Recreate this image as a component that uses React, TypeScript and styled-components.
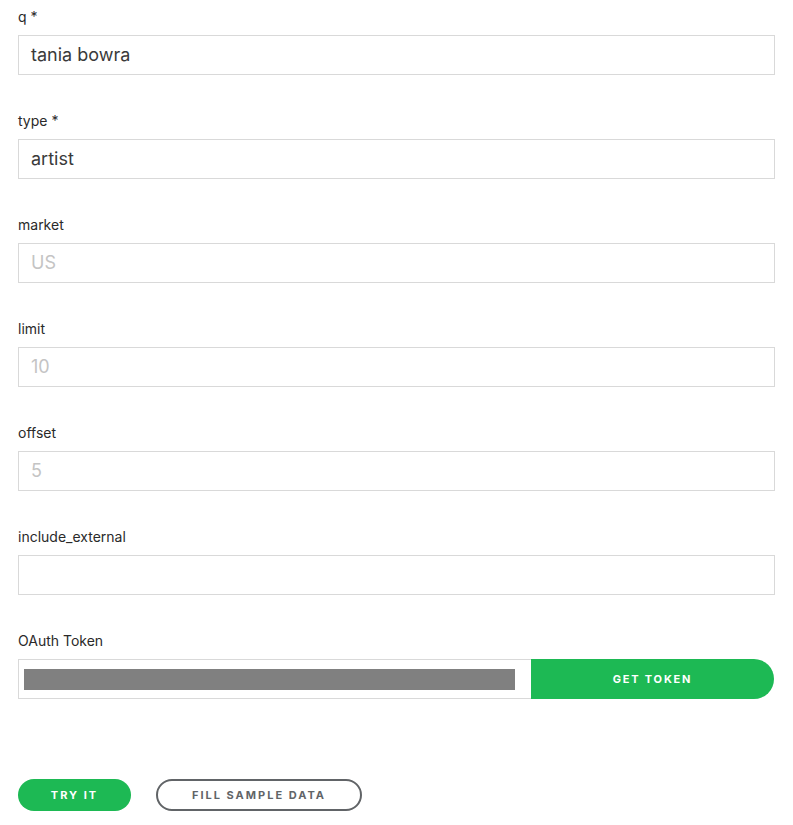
import React from "react";
import styled, { createGlobalStyle } from "styled-components";

const Global = createGlobalStyle`
  html, body { margin: 0; padding: 0; background: #fff; }
  body { font-family: "Inter", "Lato", "Liberation Sans", sans-serif; }
  * { box-sizing: border-box; }
`;

const Page = styled.div`
  padding: 7px 18px 0 18px;
  width: 793px;
`;

const Field = styled.div`
  display: flex;
  flex-direction: column;
  margin-bottom: 36px;
`;

const Label = styled.label`
  display: block;
  font-size: 14px;
  line-height: 20px;
  font-weight: 400;
  color: #2a2a2a;
  margin-bottom: 8px;
`;

const Input = styled.div<{ $placeholder?: boolean }>`
  height: 40px;
  border: 1px solid #d9d9d9;
  padding: 0 12px 2px 12px;
  display: flex;
  align-items: center;
  font-size: 18px;
  font-weight: 400;
  color: ${(p) => (p.$placeholder ? "#c4c4c4" : "#3a3a3a")};
`;

const TokenRow = styled.div`
  display: flex;
  height: 40px;
`;

const TokenInput = styled.div`
  width: 513px;
  border: 1px solid #d9d9d9;
  border-right: none;
  padding: 9px 16px 8px 5px;
  display: flex;
`;

const TokenBar = styled.div`
  flex: 1;
  background: #808080;
`;

const GetToken = styled.button`
  flex: 1;
  border: none;
  background: #1db954;
  color: #fff;
  border-radius: 0 20px 20px 0;
  font-family: inherit;
  font-weight: 700;
  font-size: 11px;
  letter-spacing: 1.8px;
  text-transform: uppercase;
  margin-right: 1px;
  padding: 0 0 1px 0;
`;

const Actions = styled.div`
  display: flex;
  gap: 25px;
  margin-top: 80px;
`;

const Pill = styled.button<{ $primary?: boolean }>`
  height: 32px;
  border-radius: 16px;
  font-family: inherit;
  font-weight: 700;
  font-size: 11px;
  letter-spacing: 2px;
  text-transform: uppercase;
  padding: 0 0 1px 0;
  width: ${(p) => (p.$primary ? "113px" : "206px")};
  background: ${(p) => (p.$primary ? "#1db954" : "#fff")};
  color: ${(p) => (p.$primary ? "#fff" : "#616467")};
  border: ${(p) => (p.$primary ? "none" : "2px solid #616467")};
`;

const fields: { label: string; value: string; placeholder?: boolean }[] = [
  { label: "q *", value: "tania bowra" },
  { label: "type *", value: "artist" },
  { label: "market", value: "US", placeholder: true },
  { label: "limit", value: "10", placeholder: true },
  { label: "offset", value: "5", placeholder: true },
  { label: "include_external", value: "" },
];

export default function App() {
  return (
    <>
      <Global />
      <Page>
        {fields.map((f) => (
          <Field key={f.label}>
            <Label>{f.label}</Label>
            <Input $placeholder={f.placeholder}>{f.value}</Input>
          </Field>
        ))}
        <Label as="div">OAuth Token</Label>
        <TokenRow>
          <TokenInput>
            <TokenBar />
          </TokenInput>
          <GetToken>Get Token</GetToken>
        </TokenRow>
        <Actions>
          <Pill $primary>Try it</Pill>
          <Pill>Fill sample data</Pill>
        </Actions>
      </Page>
    </>
  );
}
